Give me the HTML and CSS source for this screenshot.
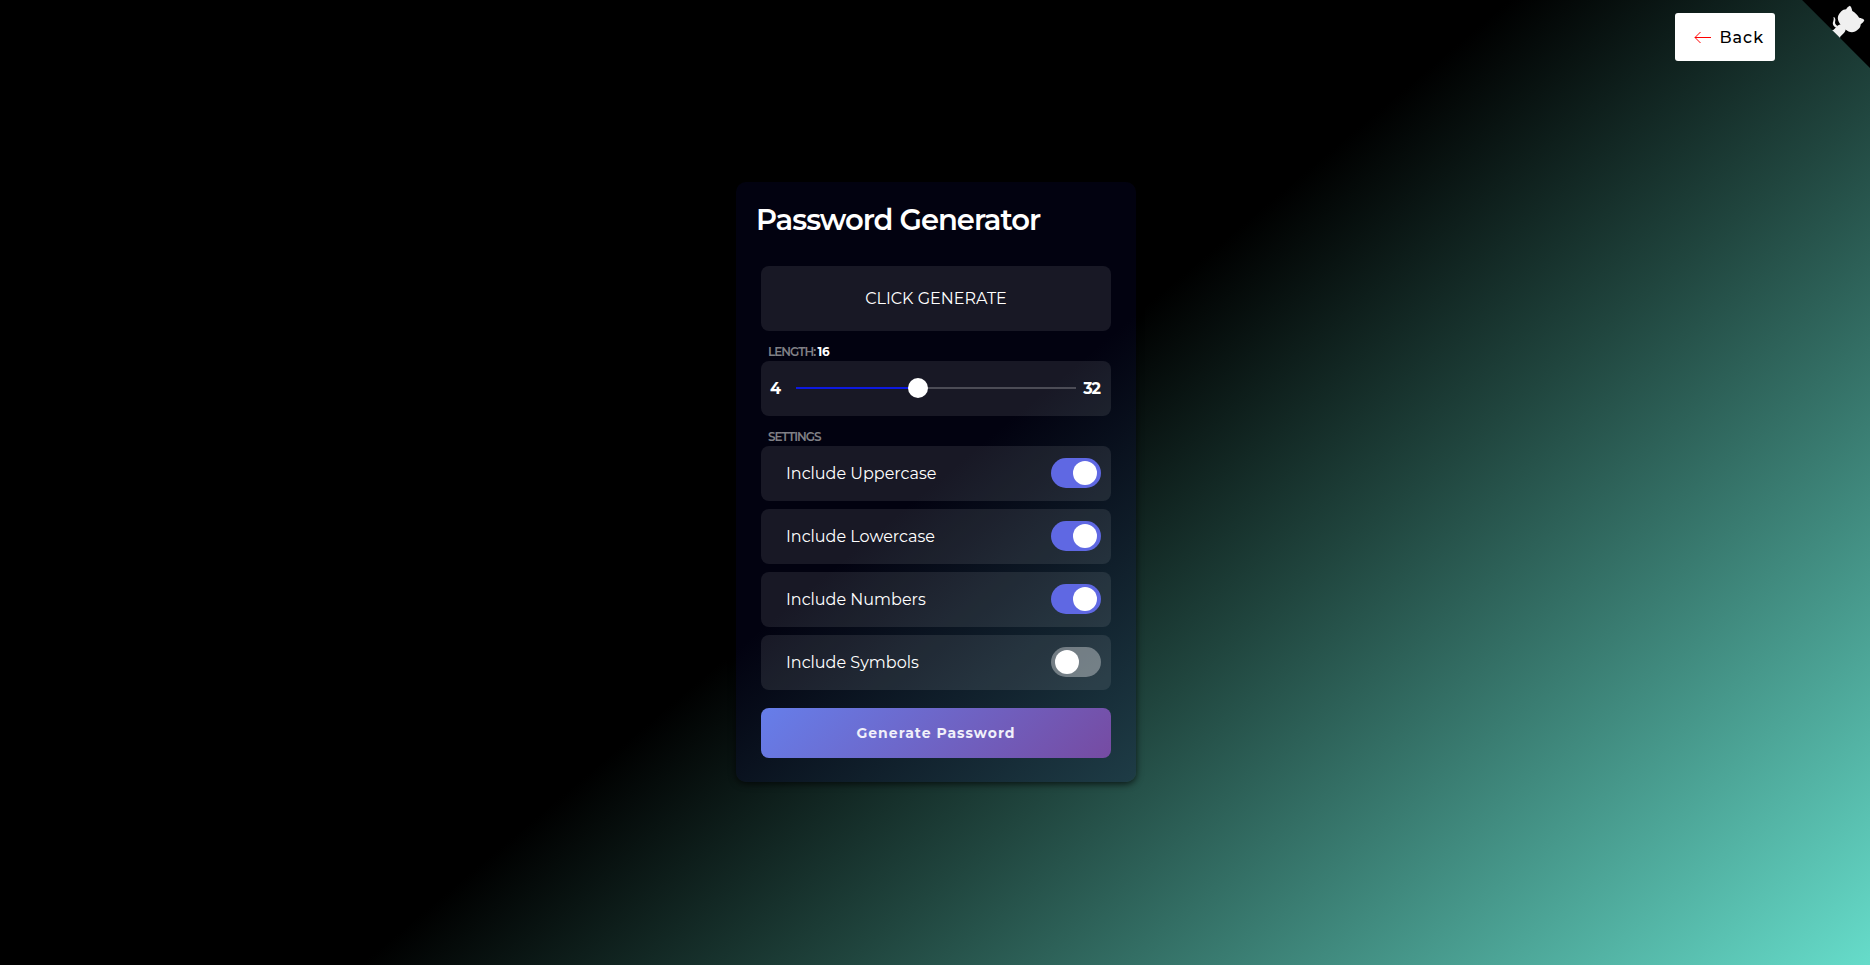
FILE: index.html
```html
<!DOCTYPE html>
<html lang="en">
<head>
<meta charset="utf-8">
<title>Password Generator</title>
<link rel="stylesheet" href="styles.css">
</head>
<body>
<a class="back" href="#"><svg class="back-icon" viewBox="0 0 17 13" aria-hidden="true"><path d="M17 6.500H1M6.500 1L1 6.500l5.500 5.500"/></svg>Back</a>
<a class="corner" href="#" aria-label="View source on GitHub">
<svg viewBox="0 22 234 228" aria-hidden="true">
<path d="M0,0 L115,115 L130,115 L142,142 L250,250 L250,0 Z"/>
<path class="cat" d="M128.3,109.0 C113.8,99.7 119.0,89.6 119.0,89.6 C122.0,82.7 120.5,78.6 120.5,78.6 C119.2,72.0 123.4,76.3 123.4,76.3 C127.3,80.9 125.5,87.3 125.5,87.3 C122.9,97.6 130.6,101.9 134.4,103.2"/>
<path class="cat" d="M115.0,115.0 C114.9,115.1 118.7,116.5 119.8,115.4 L133.7,101.6 C136.9,99.2 139.9,98.4 142.2,98.6 C133.8,88.0 127.5,74.4 143.8,58.0 C148.5,53.4 154.0,51.2 159.7,51.0 C160.3,49.4 163.2,43.6 171.4,40.1 C171.4,40.1 176.1,42.5 178.8,56.2 C183.1,58.6 187.2,61.8 190.9,65.4 C194.5,69.0 197.7,73.2 200.1,77.6 C213.8,80.2 216.3,84.9 216.3,84.9 C212.7,93.1 206.9,96.0 205.4,96.6 C205.1,102.4 203.0,107.8 198.3,112.5 C181.9,128.9 168.3,122.5 157.7,114.1 C157.9,116.9 156.7,120.9 152.7,124.9 L141.0,136.5 C139.8,137.7 141.6,141.9 141.8,141.8 Z"/>
</svg></a>
<main class="card">
<h1 class="title">Password Generator</h1>
<div class="content">
<output class="result">CLICK GENERATE</output>
<label class="caption" for="length">LENGTH: <span class="value">16</span></label>
<div class="panel range"><span>4</span><input class="slider" id="length" type="range" min="4" max="32" value="16"><span>32</span></div>
<h2 class="caption">SETTINGS</h2>
<div class="settings">
<div class="panel setting"><label for="upper">Include Uppercase</label><input class="toggle" id="upper" type="checkbox" checked></div>
<div class="panel setting"><label for="lower">Include Lowercase</label><input class="toggle" id="lower" type="checkbox" checked></div>
<div class="panel setting"><label for="numbers">Include Numbers</label><input class="toggle" id="numbers" type="checkbox" checked></div>
<div class="panel setting"><label for="symbols">Include Symbols</label><input class="toggle" id="symbols" type="checkbox"></div>
</div>
<button class="generate" type="button">Generate Password</button>
</div>
</main>
</body>
</html>
```

FILE: styles.css
```css
* { box-sizing: border-box; }
body {
  margin: 0;
  min-height: 100vh;
  padding: 0 0 2px 2px;
  display: flex;
  align-items: center;
  justify-content: center;
  font-family: Montserrat, Inter, sans-serif;
  font-size: 16px;
  color: #fff;
  background: linear-gradient(140deg, #000 50%, #20453e 66%, #66dcca 100%);
}
.back {
  position: absolute;
  top: 13px;
  right: 95px;
  display: flex;
  align-items: center;
  justify-content: flex-end;
  gap: 8px;
  width: 100px;
  height: 48px;
  padding-right: 11px;
  border-radius: 3px;
  background: #fff;
  color: #000;
  font-weight: 500;
  letter-spacing: 1px;
  text-decoration: none;
}
.back-icon { width: 17px; height: 13px; fill: none; stroke: #ff0000; }
.corner { position: absolute; top: 0; right: 0; }
.corner svg { display: block; width: 75px; height: 73px; }
.cat { fill: #f0f0f0; }
.card {
  width: 400px;
  max-width: 100%;
  padding: 17px 20px 24px;
  border-radius: 10px;
  background: linear-gradient(140deg, #020210 50%, #1e3c46 100%);
  box-shadow: 0 2px 7px rgba(0, 0, 0, 0.7);
}
.title { margin: 0; font-size: 29px; line-height: 42px; font-weight: 600; letter-spacing: -1px; }
.content { display: flex; flex-direction: column; padding: 25px 5px 0; }
.result {
  height: 65px;
  display: flex;
  align-items: center;
  justify-content: center;
  border-radius: 8px;
  background: rgba(255, 255, 255, 0.09);
}
.caption {
  margin: 12px 0 0;
  padding-left: 7px;
  font-size: 12px;
  line-height: 18px;
  font-weight: 600;
  letter-spacing: -1px;
  color: #808086;
}
.value { color: #fff; font-weight: 700; letter-spacing: 0; }
.panel {
  display: flex;
  align-items: center;
  height: 55px;
  padding: 0 10px;
  border-radius: 8px;
  background: rgba(255, 255, 255, 0.09);
}
.range { justify-content: space-between; padding: 0 11px 0 9px; font-weight: 700; letter-spacing: -1px; }
.slider {
  appearance: none;
  width: 280px;
  height: 20px;
  margin: 0 7px 0 auto;
  background: linear-gradient(90deg, #0d19e0 43%, #4c4c56 43%) center / 100% 2px no-repeat;
}
.slider::-webkit-slider-thumb {
  appearance: none;
  width: 20px;
  height: 20px;
  border-radius: 50%;
  background: #fff;
}
.settings { display: flex; flex-direction: column; gap: 8px; }
.setting { justify-content: space-between; padding-left: 25px; }
.toggle {
  appearance: none;
  display: flex;
  align-items: center;
  width: 50px;
  height: 30px;
  margin: 0;
  padding: 0 4px;
  border-radius: 15px;
  background: rgba(255, 255, 255, 0.35);
}
.toggle::before { content: ""; width: 24px; height: 24px; border-radius: 50%; background: #fff; }
.toggle:checked { justify-content: flex-end; background: #5f68e3; }
.generate {
  height: 50px;
  margin-top: 18px;
  border: 0;
  border-radius: 8px;
  background: linear-gradient(135deg, #667eea, #764ba2);
  color: #f0f0fa;
  font-family: inherit;
  font-size: 14px;
  font-weight: 700;
  letter-spacing: 1px;
}
```
